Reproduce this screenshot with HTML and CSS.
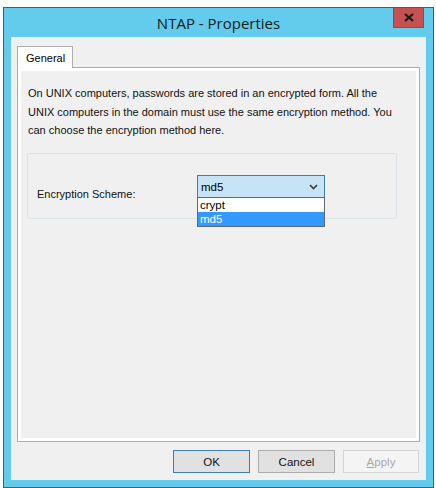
FILE: index.html
```html
<!DOCTYPE html>
<html>
<head>
<meta charset="utf-8">
<link rel="stylesheet" href="styles.css">
</head>
<body>
<div class="window">
  <div class="titlebar">
    <span class="title">NTAP - Properties</span>
    <div class="close">
      <svg width="10" height="9" viewBox="0 0 10 9"><path d="M1 1 L9 8 M9 1 L1 8" stroke="#1a1a1a" stroke-width="2.3" stroke-linecap="butt"/></svg>
    </div>
  </div>
  <div class="client">
    <div class="tabs">
      <div class="tab">General</div>
    </div>
    <div class="panel">
      <div class="page">
        <p class="intro">On UNIX computers, passwords are stored in an encrypted form. All the UNIX computers in the domain must use the same encryption method. You can choose the encryption method here.</p>
        <div class="group">
          <span class="label">Encryption Scheme:</span>
          <div class="combo-wrap">
            <div class="combo">
              <span>md5</span>
              <svg class="chev" width="9" height="6" viewBox="0 0 9 6"><path d="M1 1 L4.5 4.5 L8 1" fill="none" stroke="#3a3a3a" stroke-width="1.6"/></svg>
            </div>
            <div class="dropdown">
              <div class="opt">crypt</div>
              <div class="opt sel">md5</div>
            </div>
          </div>
        </div>
      </div>
    </div>
    <div class="buttons">
      <div class="btn default">OK</div>
      <div class="btn">Cancel</div>
      <div class="btn disabled"><u>A</u>pply</div>
    </div>
  </div>
</div>
</body>
</html>
```
FILE: styles.css
```css
html, body {
  margin: 0;
  padding: 0;
  background: #ffffff;
}
body {
  font-family: "Liberation Sans", Arial, sans-serif;
  font-size: 11px;
  color: #000;
}
.window {
  margin: 7px 0 0 3px;
  width: 431px;
  height: 481px;
  box-sizing: border-box;
  border: 1px solid #4f5b63;
  background: #63cbeb;
  padding: 0 7px 7px 7px;
  display: flex;
  flex-direction: column;
  position: relative;
}
.titlebar {
  height: 29px;
  display: flex;
  align-items: center;
  justify-content: center;
}
.title {
  font-family: "Open Sans", "Noto Sans", sans-serif;
  font-size: 15px;
  color: #1a1a1a;
  margin-top: 1px;
}
.close {
  position: absolute;
  top: 0;
  right: 9px;
  width: 31px;
  height: 20px;
  box-sizing: border-box;
  background: #c75050;
  border: 1px solid #b13d3d;
  border-top: none;
  display: flex;
  align-items: center;
  justify-content: center;
}
.client {
  flex: 1;
  background: #f0f0f0;
  padding: 9px 6px 0 6px;
  display: flex;
  flex-direction: column;
}
.tabs {
  display: flex;
  height: 21px;
}
.tab {
  width: 56px;
  height: 22px;
  box-sizing: border-box;
  border: 1px solid #adadad;
  border-bottom: none;
  background: #ffffff;
  padding: 5px 0 0 8px;
  position: relative;
  z-index: 1;
}
.panel {
  height: 375px;
  box-sizing: border-box;
  border: 1px solid #adadad;
  background: #ffffff;
  padding: 3px;
  display: flex;
}
.page {
  flex: 1;
  background: #f0f0f0;
  padding: 13px 0 0 6px;
}
.intro {
  margin: 0 0 0 1px;
  width: 372px;
  line-height: 18.5px;
  color: #111;
}
.group {
  margin-top: 13px;
  width: 370px;
  height: 66px;
  box-sizing: border-box;
  border: 1px solid #d9e3e8;
  border-radius: 3px;
  display: flex;
  align-items: center;
  padding: 0 0 0 9px;
}
.label {
  width: 160px;
  margin-top: 17px;
  color: #111;
}
.combo-wrap {
  position: relative;
  margin-top: 2px;
}
.combo {
  width: 128px;
  height: 23px;
  box-sizing: border-box;
  border: 1px solid #3c7fb1;
  background: #c7e4f6;
  display: flex;
  align-items: center;
  justify-content: space-between;
  padding: 0 6px 0 3px;
  font-size: 11.5px;
}
.chev {
  display: block;
}
.dropdown {
  position: absolute;
  left: 0;
  top: 22px;
  width: 128px;
  box-sizing: border-box;
  border: 1px solid #5f6a74;
  background: #ffffff;
  font-size: 11.5px;
}
.opt {
  height: 14px;
  line-height: 14px;
  padding-left: 2px;
}
.opt.sel {
  background: #3399ff;
  color: #ffffff;
}
.buttons {
  display: flex;
  justify-content: flex-end;
  gap: 8px;
  padding: 8px 1px 0 0;
}
.btn {
  width: 77px;
  height: 23px;
  box-sizing: border-box;
  border: 1px solid #adadad;
  background: #e1e1e1;
  display: flex;
  align-items: center;
  justify-content: center;
  color: #111;
  font-size: 11.5px;
}
.btn.default {
  border-color: #3c7fb1;
}
.btn.disabled {
  border-color: #d4d4d4;
  background: #f4f4f4;
  color: #a8a8a8;
  width: 76px;
}
.btn u {
  text-decoration: underline;
}
```
